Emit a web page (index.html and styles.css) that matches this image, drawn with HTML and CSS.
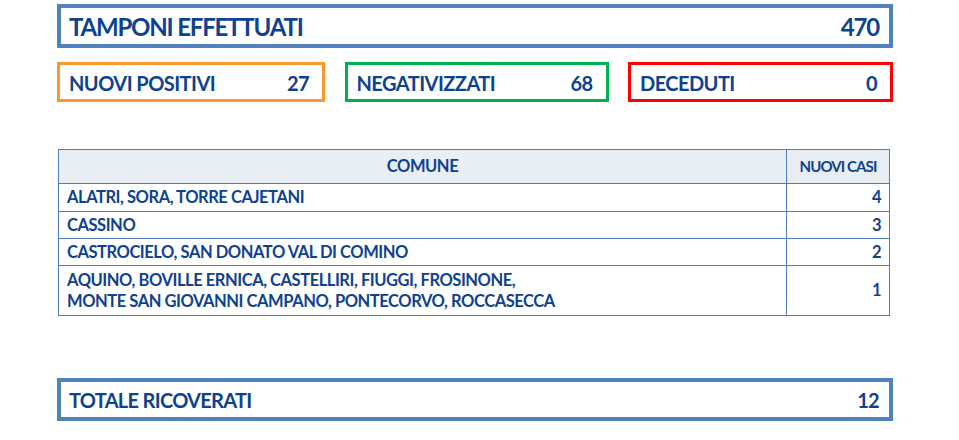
FILE: index.html
```html
<!DOCTYPE html>
<html lang="it">
<head>
<meta charset="utf-8">
<title>Report</title>
<link rel="stylesheet" href="styles.css">
</head>
<body>
<div class="page">
  <div class="box box-big">
    <span>TAMPONI EFFETTUATI</span><span>470</span>
  </div>
  <div class="row">
    <div class="box box-small orange"><span>NUOVI POSITIVI</span><span>27</span></div>
    <div class="box box-small green"><span>NEGATIVIZZATI</span><span>68</span></div>
    <div class="box box-small red"><span>DECEDUTI</span><span>0</span></div>
  </div>
  <table class="cases">
    <thead>
      <tr><th class="c-name">COMUNE</th><th class="c-num">NUOVI CASI</th></tr>
    </thead>
    <tbody>
      <tr class="r1"><td>ALATRI, SORA, TORRE CAJETANI</td><td class="num">4</td></tr>
      <tr class="r2"><td>CASSINO</td><td class="num">3</td></tr>
      <tr class="r3"><td>CASTROCIELO, SAN DONATO VAL DI COMINO</td><td class="num">2</td></tr>
      <tr class="r4"><td>AQUINO, BOVILLE ERNICA, CASTELLIRI, FIUGGI, FROSINONE,<br>MONTE SAN GIOVANNI CAMPANO, PONTECORVO, ROCCASECCA</td><td class="num">1</td></tr>
    </tbody>
  </table>
  <div class="box box-big total">
    <span>TOTALE RICOVERATI</span><span>12</span>
  </div>
</div>
</body>
</html>
```
FILE: styles.css
```css
html, body {
  margin: 0;
  padding: 0;
  background: #ffffff;
}
body {
  font-family: "Lato", "Open Sans", "Liberation Sans", sans-serif;
  font-weight: 700;
  color: #0e4290;
}
.page {
  width: 836px;
  margin-left: 57px;
  padding-top: 4px;
}
.box {
  box-sizing: border-box;
  display: flex;
  justify-content: space-between;
  align-items: center;
  background: #fff;
}
.box-big {
  height: 44px;
  border: 4px solid #5282be;
  padding: 1px 10px 0 8px;
  font-size: 24px;
  letter-spacing: -1.2px;
}
.row {
  display: flex;
  justify-content: space-between;
  margin-top: 14px;
}
.box-small {
  height: 40px;
  border: 3px solid;
  padding: 1px 13px 0 9px;
  font-size: 20px;
  letter-spacing: -0.55px;
}
.orange { width: 268px; border-color: #f9992f; }
.green { width: 264px; border-color: #00b04f; }
.red { width: 265px; border-color: #ff0000; }

.cases {
  margin-top: 47px;
  margin-left: 1px;
  width: 832px;
  border-collapse: collapse;
  font-size: 16.5px;
  letter-spacing: -0.45px;
}
.cases th, .cases td {
  border: 1px solid #4f7dbd;
  padding: 0 8px;
  line-height: 21px;
}
.cases th {
  background: #e9edf4;
  height: 33px;
  font-size: 16.5px;
}
.cases th.c-num {
  width: 86px;
  font-size: 15px;
  letter-spacing: -0.9px;
  text-align: center;
}
.cases td { text-align: left; }
.cases td.num { text-align: right; }
.r1 td { height: 27px; }
.r2 td { height: 26px; }
.r3 td { height: 26px; }
.r4 td { height: 49px; }

.total {
  margin-top: 62px;
  height: 43px;
  font-size: 20px;
  letter-spacing: -0.7px;
}
```
